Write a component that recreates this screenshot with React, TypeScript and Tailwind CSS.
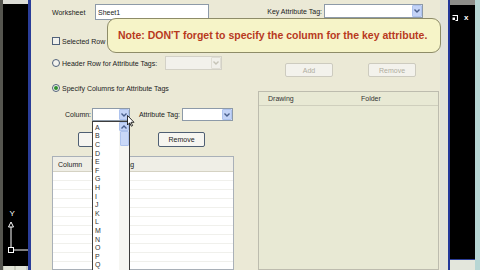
import React from "react";

const letters = "ABCDEFGHIJKLMNOPQR".split("");

function Arrow({ up = false, disabled = false }: { up?: boolean; disabled?: boolean }) {
  return (
    <div
      className={
        disabled
          ? "flex h-full w-[10px] items-center justify-center rounded-[1px] bg-[#f1f0ea] border border-[#e0ded4]"
          : "flex h-full w-[10px] items-center justify-center rounded-[1px] bg-[#c3d3f7] border border-[#aec3ee]"
      }
    >
      <svg width="6" height="4" viewBox="0 0 6 4">
        <path
          d={up ? "M0.5 3.5 L3 1 L5.5 3.5" : "M0.5 0.5 L3 3 L5.5 0.5"}
          stroke={disabled ? "#c5c3b6" : "#4a5f8c"}
          strokeWidth="1.4"
          fill="none"
        />
      </svg>
    </div>
  );
}

function Radio({ checked = false }: { checked?: boolean }) {
  return (
    <div className="flex h-[8px] w-[8px] shrink-0 items-center justify-center rounded-full border border-[#51627a] bg-[#f3f3ee]">
      {checked && <div className="h-[4px] w-[4px] rounded-full bg-[#2f8f2f]" />}
    </div>
  );
}

function Btn({ text, disabled = false, className = "" }: { text: string; disabled?: boolean; className?: string }) {
  return (
    <div
      className={
        (disabled
          ? "border-[#cdcbbf] bg-[#f3f2ec] text-[#b0ad9f] "
          : "border-[#4f5f73] bg-[#f6f5f0] text-[#222] ") +
        "flex items-center justify-center rounded-[2px] border " +
        className
      }
    >
      {text}
    </div>
  );
}

export default function App() {
  return (
    <div className="flex h-[270px] w-[480px] overflow-hidden bg-black font-['Liberation_Sans',Arial,sans-serif] text-[7px] leading-none text-[#222]">
      {/* AutoCAD canvas, left */}
      <div className="flex w-[28px] shrink-0">
        <div className="w-[3px] bg-[#55554f]" />
        <div className="flex flex-1 flex-col bg-black">
          <div className="h-[4px] shrink-0 bg-[#dcdcd6]" />
          <div className="min-h-0 flex-1">
            <svg width="25" height="262" viewBox="0 0 25 262">
              <text x="6.5" y="212" fill="#fff" fontSize="8" fontFamily="Liberation Sans, sans-serif">Y</text>
              <path d="M8 218 L5.5 223 L10.5 223 Z" stroke="#fff" strokeWidth="1" fill="none" />
              <line x1="8" y1="223" x2="8" y2="243" stroke="#fff" strokeWidth="1" />
              <rect x="5.5" y="243.5" width="5" height="5" stroke="#fff" strokeWidth="1" fill="none" />
              <line x1="11" y1="246" x2="25" y2="246" stroke="#fff" strokeWidth="1" />
            </svg>
          </div>
          <div className="flex h-[4px] shrink-0 gap-[2px] bg-[#c8cbbd] px-[1px]">
            <div className="w-[10px] bg-[#e2e4d8]" />
            <div className="w-[10px] bg-[#e2e4d8]" />
          </div>
        </div>
      </div>
      <div className="w-[3px] shrink-0 bg-[#2a3d98]" />

      {/* dialog */}
      <div className="relative flex w-[417px] shrink-0 bg-[#ebe9d6] pl-[21px]">
        {/* left column */}
        <div className="flex w-[184px] shrink-0 flex-col">
          <div className="mt-[4px] flex h-[16px] shrink-0 items-center">
            <span className="w-[43px]">Worksheet</span>
            <div className="flex h-full w-[114px] items-center border border-[#8d9aa8] bg-white pl-[2px]">Sheet1</div>
          </div>

          <div className="mt-[13px] flex h-[16px] shrink-0 items-center gap-[2px]">
            <div className="h-[8px] w-[8px] border border-[#51627a] bg-[#f1f1ec]" />
            <span>Selected Row</span>
          </div>

          <div className="mt-[6px] flex h-[16px] shrink-0 items-center">
            <div className="flex w-[113px] items-center gap-[2px]">
              <Radio />
              <span>Header Row for Attribute Tags:</span>
            </div>
            <div className="flex h-[14px] w-[57px] justify-end border border-[#d3d1c6] bg-[#f2f1eb]">
              <Arrow disabled />
            </div>
          </div>

          <div className="mt-[9px] flex h-[16px] shrink-0 items-center gap-[2px]">
            <Radio checked />
            <span>Specify Columns for Attribute Tags</span>
          </div>

          <div className="mt-[12px] flex h-[13px] shrink-0 items-center pl-[13px]">
            <span className="w-[27px]">Column:</span>
            <div className="relative h-full w-[38px]">
              <div className="flex h-full justify-end border border-[#8d9aa8] bg-white">
                <Arrow />
              </div>
              {/* open drop-down list */}
              <div className="absolute left-0 top-full z-10 flex h-[160px] w-[38px] border border-[#3d3d3d] bg-white">
                <div className="flex flex-1 flex-col pl-[2px] pt-[1px] text-[#333]">
                  {letters.map((l) => (
                    <div key={l} className="flex h-[8.6px] shrink-0 items-center">{l}</div>
                  ))}
                </div>
                <div className="flex w-[10px] flex-col bg-[#f6f6f2]">
                  <div className="h-[9px] shrink-0"><Arrow up /></div>
                  <div className="mx-[0.5px] h-[15px] shrink-0 rounded-[1px] border border-[#aec3ee] bg-[#c9d8f8]" />
                </div>
              </div>
              {/* mouse cursor */}
              <svg className="absolute left-[35px] top-[7px] z-20" width="8" height="12" viewBox="0 0 8 12">
                <path d="M0.5 0.5 L0.5 10 L2.7 7.8 L4.3 11.2 L5.6 10.6 L4.1 7.3 L7 7.3 Z" fill="#fff" stroke="#000" strokeWidth="0.8" />
              </svg>
            </div>
            <span className="w-[52px] pr-[2px] text-right">Attribute Tag:</span>
            <div className="flex h-full w-[51px] justify-end border border-[#8d9aa8] bg-white">
              <Arrow />
            </div>
          </div>

          <div className="mt-[11px] flex h-[15px] shrink-0 gap-[33px] pl-[26px]">
            <Btn text="Add" className="w-[47px]" />
            <Btn text="Remove" className="w-[47px]" />
          </div>

          <div className="mt-[9px] flex min-h-0 w-[182px] flex-1 flex-col overflow-hidden border border-[#a9b0b8] bg-white">
            <div className="flex h-[15px] shrink-0 items-center border-b border-[#d5d2c3] bg-[#efeee6]">
              <span className="w-[38px] pl-[5px]">Column</span>
              <div className="h-[11px] w-px bg-[#cfccbc]" />
              <span className="pl-[3px]">Attribute Tag</span>
            </div>
            {Array.from({ length: 14 }).map((_, i) => (
              <div key={i} className="h-[9px] shrink-0 border-b border-[#f0f0ec]" />
            ))}
          </div>
        </div>

        {/* right column */}
        <div className="ml-[22px] flex w-[181px] shrink-0 flex-col">
          <div className="mt-[4px] flex h-[14px] shrink-0 items-center">
            <span className="w-[66px] pr-[2px] text-right">Key Attribute Tag:</span>
            <div className="flex h-full w-[99px] justify-end border border-[#8d9aa8] bg-white">
              <Arrow />
            </div>
          </div>

          <div className="mt-[45px] flex h-[14px] shrink-0 gap-[35px] pl-[27px]">
            <Btn text="Add" disabled className="w-[48px]" />
            <Btn text="Remove" disabled className="w-[48px]" />
          </div>

          <div className="mt-[14px] flex min-h-0 flex-1 flex-col border border-[#bdbcae] bg-[#e8e9d4]">
            <div className="flex h-[14px] shrink-0 items-center border-b border-[#cfcfbd] text-[#333]">
              <span className="w-[102px] pl-[9px]">Drawing</span>
              <span>Folder</span>
            </div>
          </div>
        </div>

        <div className="ml-auto w-[8px] bg-[#e2e1da]" />

        {/* note callout */}
        <div className="absolute left-[76px] top-[18px] z-30 flex h-[35px] w-[334px] items-center rounded-[9px] border-[1.5px] border-[#8e8c68] bg-[#f6f4c8] pl-[10px] text-[10.5px] font-bold text-[#b8391e]">
          Note: DON'T forget to specify the column for the key attribute.
        </div>
      </div>

      <div className="w-[2px] shrink-0 bg-[#22349a]" />

      {/* AutoCAD canvas, right */}
      <div className="flex w-[25px] shrink-0 flex-col bg-black">
        <div className="h-[5px] shrink-0 bg-[#8e8e8a]" />
        <div className="mt-[9px] flex h-[8px] shrink-0 items-center gap-[6px] pl-[2px] text-[8px] font-bold text-white">
          <svg width="6" height="6" viewBox="0 0 6 6">
            <path d="M0.5 0.5 H5.5 V5.5 H3.5" stroke="#fff" strokeWidth="1.2" fill="none" />
            <rect x="0.5" y="2.5" width="2.5" height="2.5" fill="#fff" />
          </svg>
          <span>x</span>
        </div>
        <div className="flex-1" />
        <div className="h-[11px] shrink-0 border-t border-[#2b3d98] bg-[#e3e6dc]" />
      </div>
      <div className="w-[5px] shrink-0 bg-[#b7d6d4]" />
    </div>
  );
}
